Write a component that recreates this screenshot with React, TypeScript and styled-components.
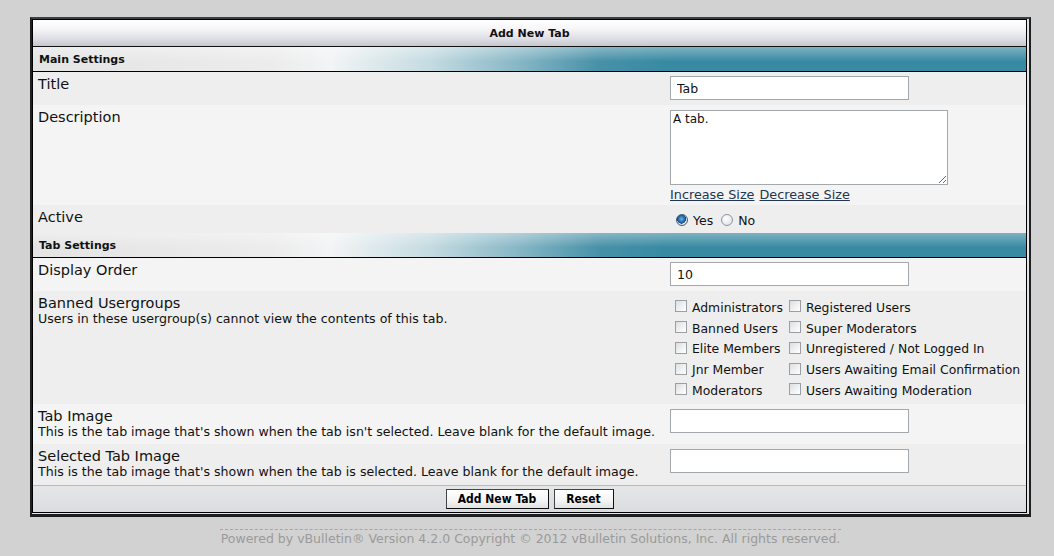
import React from 'react';
import styled, { createGlobalStyle } from 'styled-components';

const GlobalStyle = createGlobalStyle`
  html, body {
    margin: 0;
    padding: 0;
    background: #d2d2d2;
  }
  body {
    font-family: "DejaVu Sans", Verdana, sans-serif;
    color: #111;
  }
`;

const Page = styled.div`
  padding: 17px 0 0 30px;
  width: 1001px;
`;

const Frame = styled.div`
  border: 2px solid #1d2023;
  border-bottom-width: 3px;
  border-top-color: #3c4145;
  padding: 0 2px 1px 0;
  background: #e2e4e6;
`;

const Sheet = styled.div`
  border: 1px solid #000;
  background: #efefef;
`;

const TitleBar = styled.div`
  height: 26px;
  border-bottom: 1px solid #111;
  background: linear-gradient(to bottom, #ffffff 0%, #f6f6f8 35%, #dcdce2 75%, #c6c6cf 100%);
  display: flex;
  align-items: center;
  justify-content: center;
  font-size: 11px;
  font-weight: bold;
`;

const SectionBar = styled.div`
  height: 24px;
  border-bottom: 1px solid #000;
  background:
    linear-gradient(to bottom, rgba(255, 255, 255, 0.35), rgba(255, 255, 255, 0) 60%),
    linear-gradient(to right, #e4e4e4 0%, #ececec 24%, #f2f4f5 30%, #c4dbe1 40%, #86b6c5 49%, #4791a8 57%, #378aa2 64%, #378aa2 100%);
  display: flex;
  align-items: center;
  padding-left: 6px;
  font-size: 11px;
  font-weight: bold;
`;

const Row = styled.div<{ $alt?: boolean }>`
  display: grid;
  grid-template-columns: 1fr 362px;
  background: ${(p) => (p.$alt ? '#f4f4f4' : '#eeeeee')};
`;

const LabelCell = styled.div<{ $pb?: number }>`
  padding: 4px 5px ${(p) => p.$pb ?? 5}px;
`;

const Label = styled.div`
  font-size: 14.5px;
  line-height: 17px;
`;

const Hint = styled.div`
  font-size: 12.6px;
  line-height: 14px;
`;

const ValueCell = styled.div<{ $pad?: string }>`
  padding: ${(p) => p.$pad || '4px 6px 5px'};
`;

const TextInput = styled.input`
  display: block;
  box-sizing: border-box;
  width: 239px;
  height: 24px;
  margin: 0;
  border: 1px solid #a3a8ad;
  background: #fff;
  padding: 0 6px;
  font-family: "DejaVu Sans", Verdana, sans-serif;
  font-size: 12.5px;
  color: #111;
  outline: none;
`;

const TextArea = styled.textarea`
  display: block;
  box-sizing: border-box;
  width: 278px;
  height: 75px;
  margin: 0;
  border: 1px solid #a3a8ad;
  background: #fff;
  padding: 1px 2px;
  font-family: "DejaVu Sans", Verdana, sans-serif;
  font-size: 12px;
  color: #111;
  resize: both;
  outline: none;
`;

const Links = styled.div`
  display: flex;
  gap: 5px;
  font-size: 12.8px;
  line-height: 17px;
  padding-top: 1px;
`;

const SizeLink = styled.a`
  color: #1f3550;
  text-decoration: underline;
  cursor: pointer;
`;

const RadioGroup = styled.div`
  display: flex;
  align-items: center;
  gap: 8px;
  font-size: 12.5px;
  line-height: 16px;
`;

const Choice = styled.label`
  display: flex;
  align-items: center;
  gap: 5px;
  white-space: nowrap;
`;

const Radio = styled.input.attrs({ type: 'radio' })`
  appearance: none;
  margin: 0;
  width: 12px;
  height: 12px;
  border-radius: 50%;
  border: 1px solid #8f969c;
  background: radial-gradient(circle at 40% 35%, #ffffff 0%, #e4e6e8 70%, #cfd2d5 100%);
  box-sizing: border-box;
  position: relative;
  top: -1px;
  &:checked {
    border-color: #3d5f80;
    background:
      radial-gradient(circle at 45% 40%, #6fb0e6 0%, #1d5fa0 45%, #123d6c 55%, transparent 58%),
      radial-gradient(circle, #f4f6f8 0%, #d6dadd 100%);
  }
`;

const GroupList = styled.div`
  display: grid;
  grid-template-rows: repeat(5, 20.75px);
  grid-auto-flow: column;
  justify-content: start;
  column-gap: 6px;
  font-size: 12.4px;
`;

const Check = styled.input.attrs({ type: 'checkbox' })`
  appearance: none;
  margin: 0;
  width: 12px;
  height: 12px;
  box-sizing: border-box;
  border: 1px solid #9a9fa4;
  background: linear-gradient(135deg, #dcdee0 0%, #f2f3f4 60%, #ffffff 100%);
  position: relative;
  top: -1px;
`;

const FooterBar = styled.div`
  border-top: 1px solid #b6b9bc;
  background: linear-gradient(to bottom, #e4e6e7, #dadddf);
  display: flex;
  justify-content: center;
  gap: 5px;
  padding: 3px 0 3px;
`;

const Button = styled.button<{ $w: number }>`
  width: ${(p) => p.$w}px;
  height: 20px;
  margin: 0;
  padding: 0;
  border: 1px solid #444;
  border-right-color: #111;
  border-bottom-color: #111;
  background: linear-gradient(to bottom, #ffffff 0%, #f4f4f4 60%, #e2e2e2 100%);
  font-family: "DejaVu Sans Condensed", "DejaVu Sans", sans-serif;
  font-stretch: condensed;
  font-weight: bold;
  font-size: 12px;
  color: #000;
`;

const Copyright = styled.div`
  margin: 12px 0 0 190px;
  width: 621px;
  border-top: 1px dashed #a6a6a6;
  padding-top: 1px;
  text-align: center;
  font-size: 12.5px;
  line-height: 16px;
  color: #9a9a9a;
  white-space: nowrap;
`;

const groups = [
  'Administrators',
  'Banned Users',
  'Elite Members',
  'Jnr Member',
  'Moderators',
  'Registered Users',
  'Super Moderators',
  'Unregistered / Not Logged In',
  'Users Awaiting Email Confirmation',
  'Users Awaiting Moderation',
];

const App: React.FC = () => {
  const [active, setActive] = React.useState('yes');
  const [rows, setRows] = React.useState(4);

  return (
    <>
      <GlobalStyle />
      <Page>
        <Frame>
          <Sheet>
            <TitleBar>Add New Tab</TitleBar>
            <SectionBar>Main Settings</SectionBar>

            <Row>
              <LabelCell><Label>Title</Label></LabelCell>
              <ValueCell><TextInput defaultValue="Tab" /></ValueCell>
            </Row>

            <Row $alt>
              <LabelCell><Label>Description</Label></LabelCell>
              <ValueCell $pad="5px 6px 2px">
                <TextArea defaultValue="A tab." rows={rows} />
                <Links>
                  <SizeLink onClick={() => setRows(rows + 1)}>Increase Size</SizeLink>
                  <SizeLink onClick={() => setRows(Math.max(1, rows - 1))}>Decrease Size</SizeLink>
                </Links>
              </ValueCell>
            </Row>

            <Row>
              <LabelCell><Label>Active</Label></LabelCell>
              <ValueCell $pad="8px 6px 4px 12px">
                <RadioGroup>
                  <Choice>
                    <Radio name="active" checked={active === 'yes'} onChange={() => setActive('yes')} />
                    Yes
                  </Choice>
                  <Choice>
                    <Radio name="active" checked={active === 'no'} onChange={() => setActive('no')} />
                    No
                  </Choice>
                </RadioGroup>
              </ValueCell>
            </Row>

            <SectionBar>Tab Settings</SectionBar>

            <Row $alt>
              <LabelCell><Label>Display Order</Label></LabelCell>
              <ValueCell><TextInput defaultValue="10" /></ValueCell>
            </Row>

            <Row>
              <LabelCell>
                <Label>Banned Usergroups</Label>
                <Hint>Users in these usergroup(s) cannot view the contents of this tab.</Hint>
              </LabelCell>
              <ValueCell $pad="6px 6px 3px 11px">
                <GroupList>
                  {groups.map((g) => (
                    <Choice key={g}>
                      <Check />
                      {g}
                    </Choice>
                  ))}
                </GroupList>
              </ValueCell>
            </Row>

            <Row $alt>
              <LabelCell>
                <Label>Tab Image</Label>
                <Hint>This is the tab image that's shown when the tab isn't selected. Leave blank for the default image.</Hint>
              </LabelCell>
              <ValueCell $pad="5px 6px">
                <TextInput />
              </ValueCell>
            </Row>

            <Row>
              <LabelCell $pb={6}>
                <Label>Selected Tab Image</Label>
                <Hint>This is the tab image that's shown when the tab is selected. Leave blank for the default image.</Hint>
              </LabelCell>
              <ValueCell $pad="5px 6px">
                <TextInput />
              </ValueCell>
            </Row>

            <FooterBar>
              <Button $w={103}>Add New Tab</Button>
              <Button $w={60}>Reset</Button>
            </FooterBar>
          </Sheet>
        </Frame>
        <Copyright>
          Powered by vBulletin® Version 4.2.0 Copyright © 2012 vBulletin Solutions, Inc. All rights reserved.
        </Copyright>
      </Page>
    </>
  );
};

export default App;
